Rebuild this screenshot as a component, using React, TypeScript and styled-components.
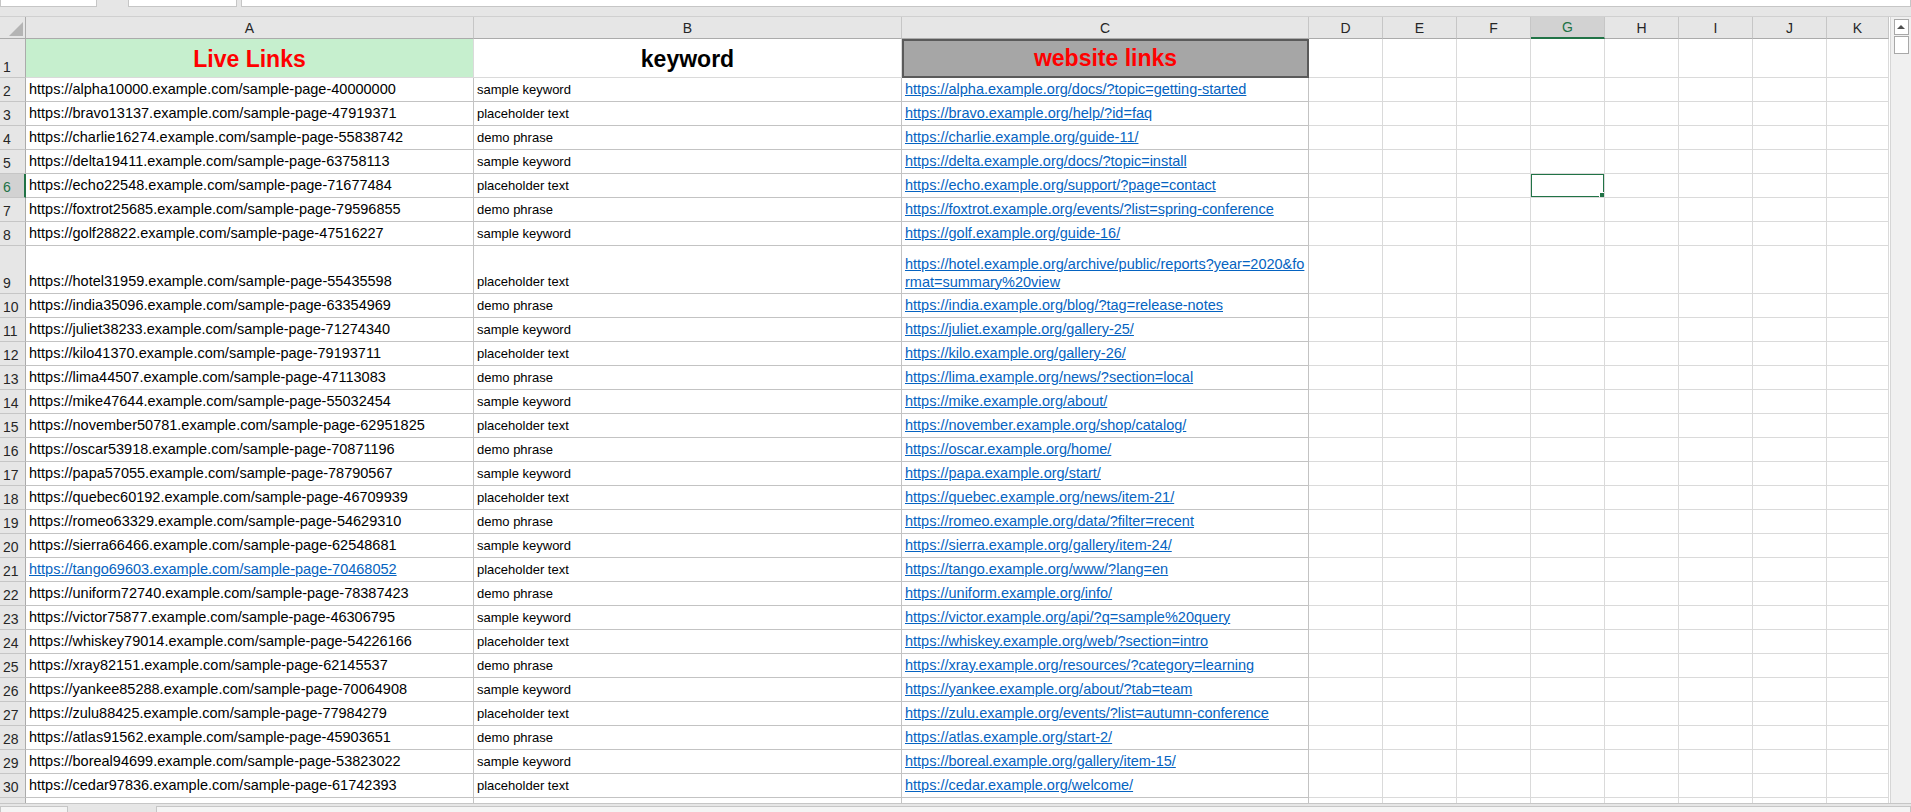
import React from 'react';
import styled, { createGlobalStyle } from 'styled-components';

const GlobalStyle = createGlobalStyle`
  html, body {
    margin: 0;
    padding: 0;
    background: #ffffff;
    overflow: hidden;
  }
  body {
    font-family: "Liberation Sans", Arial, sans-serif;
  }
`;

const Page = styled.div`
  width: 1911px;
  height: 812px;
  display: flex;
  flex-direction: column;
  background: #e6e6e6;
`;

const TopStrip = styled.div`
  height: 17px;
  display: flex;
  align-items: flex-start;
  background: #e6e6e6;
  border-bottom: 1px solid #d0d0d0;
  box-sizing: border-box;
`;

const StripBox = styled.div<{ $w?: number; $ml?: number; $grow?: boolean }>`
  height: 7px;
  background: #ffffff;
  border: 1px solid #c6c6c6;
  border-top: none;
  box-sizing: border-box;
  width: ${(p) => (p.$w ? `${p.$w}px` : 'auto')};
  margin-left: ${(p) => p.$ml ?? 0}px;
  flex: ${(p) => (p.$grow ? 1 : 'none')};
`;

const Main = styled.div`
  flex: 1;
  display: flex;
  min-height: 0;
  overflow: hidden;
`;

const Sheet = styled.div`
  flex: 1;
  display: grid;
  grid-template-columns: 26px 448px 428px 407px repeat(7, 74px) 62px;
  grid-auto-rows: 24px;
  grid-template-rows: 22px 39px;
  background: #ffffff;
  align-content: start;
  overflow: hidden;
`;

const Corner = styled.div`
  background: #e6e6e6;
  border-right: 1px solid #ababab;
  border-bottom: 1px solid #ababab;
  position: relative;
  &::after {
    content: '';
    position: absolute;
    right: 2px;
    bottom: 2px;
    border-left: 14px solid transparent;
    border-bottom: 14px solid #b4b4b4;
  }
`;

const ColHead = styled.div<{ $active?: boolean }>`
  background: ${(p) => (p.$active ? '#d2d2d2' : '#e6e6e6')};
  color: ${(p) => (p.$active ? '#217346' : '#262626')};
  border-right: 1px solid #c6c6c6;
  border-bottom: ${(p) => (p.$active ? '2px solid #217346' : '1px solid #ababab')};
  box-sizing: border-box;
  display: flex;
  align-items: center;
  justify-content: center;
  font-size: 14px;
`;

const RowHead = styled.div<{ $active?: boolean }>`
  background: ${(p) => (p.$active ? '#d2d2d2' : '#e6e6e6')};
  color: ${(p) => (p.$active ? '#217346' : '#262626')};
  border-right: ${(p) => (p.$active ? '2px solid #217346' : '1px solid #ababab')};
  border-bottom: 1px solid #c6c6c6;
  box-sizing: border-box;
  display: flex;
  align-items: flex-end;
  padding: 0 0 2px 3px;
  font-size: 14px;
  overflow: hidden;
`;

const Cell = styled.div<{ $boxed?: boolean; $small?: boolean }>`
  position: relative;
  border-right: 1px solid ${(p) => (p.$boxed ? '#c3c3c3' : '#dadada')};
  border-bottom: 1px solid ${(p) => (p.$boxed ? '#c3c3c3' : '#dadada')};
  box-sizing: border-box;
  display: flex;
  align-items: flex-end;
  padding: 0 2px 3px 3px;
  font-size: ${(p) => (p.$small ? '13px' : '14.5px')};
  color: #000000;
  white-space: nowrap;
  overflow: hidden;
  line-height: 1.2;
`;

const WrapCell = styled(Cell)`
  white-space: normal;
  word-break: break-all;
  padding-bottom: 2px;
`;

const TitleCell = styled.div<{ $bg: string; $color: string; $frame?: boolean }>`
  background: ${(p) => p.$bg};
  color: ${(p) => p.$color};
  border: ${(p) => (p.$frame ? '2px solid #5a5a5a' : 'none')};
  border-right: ${(p) => (p.$frame ? '2px solid #5a5a5a' : '1px solid #dadada')};
  border-bottom: ${(p) => (p.$frame ? '2px solid #5a5a5a' : '1px solid #dadada')};
  box-sizing: border-box;
  display: flex;
  align-items: flex-end;
  justify-content: center;
  padding-bottom: 4px;
  font-size: 23px;
  font-weight: 700;
`;

const Link = styled.span`
  color: #0563c1;
  text-decoration: underline;
`;

const Selection = styled.div`
  position: absolute;
  inset: -1px;
  border: 2px solid #217346;
  pointer-events: none;
  &::after {
    content: '';
    position: absolute;
    right: -4px;
    bottom: -4px;
    width: 6px;
    height: 6px;
    background: #217346;
    border: 1px solid #ffffff;
  }
`;

const VScroll = styled.div`
  width: 21px;
  background: #f0f0f0;
  border-left: 1px solid #d6d6d6;
  display: flex;
  flex-direction: column;
  align-items: center;
  padding-top: 2px;
  gap: 1px;
  box-sizing: border-box;
`;

const ScrollBtn = styled.div`
  width: 13px;
  height: 14px;
  background: #ffffff;
  border: 1px solid #a8a8a8;
  display: flex;
  align-items: center;
  justify-content: center;
  &::before {
    content: '';
    border-left: 4px solid transparent;
    border-right: 4px solid transparent;
    border-bottom: 4px solid #505050;
  }
`;

const ScrollThumb = styled.div`
  width: 13px;
  height: 16px;
  background: #ffffff;
  border: 1px solid #a8a8a8;
`;

const BottomBar = styled.div`
  height: 9px;
  display: flex;
  align-items: flex-end;
  background: #e6e6e6;
  border-top: 1px solid #c6c6c6;
  box-sizing: border-box;
`;

const BottomBox = styled.div<{ $w?: number; $ml?: number; $grow?: boolean }>`
  height: 6px;
  background: #f4f4f4;
  border: 1px solid #c6c6c6;
  border-bottom: none;
  box-sizing: border-box;
  width: ${(p) => (p.$w ? `${p.$w}px` : 'auto')};
  margin-left: ${(p) => p.$ml ?? 0}px;
  flex: ${(p) => (p.$grow ? 1 : 'none')};
`;

const COLS = ['A', 'B', 'C', 'D', 'E', 'F', 'G', 'H', 'I', 'J', 'K'];
const ACTIVE_COL = 'G';
const ACTIVE_ROW = 6;

const keywords = ['sample keyword', 'placeholder text', 'demo phrase'];
const hosts = [
  'alpha', 'bravo', 'charlie', 'delta', 'echo', 'foxtrot', 'golf', 'hotel',
  'india', 'juliet', 'kilo', 'lima', 'mike', 'november', 'oscar', 'papa',
  'quebec', 'romeo', 'sierra', 'tango', 'uniform', 'victor', 'whiskey',
  'xray', 'yankee', 'zulu', 'atlas', 'boreal', 'cedar',
];
const paths = [
  'docs/?topic=getting-started', 'help/?id=faq', 'guide-11/', 'docs/?topic=install',
  'support/?page=contact', 'events/?list=spring-conference', 'guide-16/',
  'archive/public/reports?year=2020&format=summary%20view', 'blog/?tag=release-notes',
  'gallery-25/', 'gallery-26/', 'news/?section=local', 'about/', 'shop/catalog/',
  'home/', 'start/', 'news/item-21/', 'data/?filter=recent', 'gallery/item-24/',
  'www/?lang=en', 'info/', 'api/?q=sample%20query', 'web/?section=intro',
  'resources/?category=learning', 'about/?tab=team', 'events/?list=autumn-conference',
  'start-2/', 'gallery/item-15/', 'welcome/',
];

type Row = { n: number; a: string; b: string; c: string; tall?: boolean; aLink?: boolean };

const rows: Row[] = hosts.map((h, i) => {
  const n = i + 2;
  const id = 40000000 + ((i * 7919371) % 39999999);
  return {
    n,
    a: `https://${h}${10000 + i * 3137}.example.com/sample-page-${id}`,
    b: keywords[i % 3],
    c: `https://${h}.example.org/${paths[i]}`,
    tall: n === 9,
    aLink: n === 21,
  };
});

const App: React.FC = () => {
  const renderEmpty = (rowNum: number, col: string) => (
    <Cell key={col}>
      {rowNum === ACTIVE_ROW && col === ACTIVE_COL && <Selection />}
    </Cell>
  );

  return (
    <>
      <GlobalStyle />
      <Page>
        <TopStrip>
          <StripBox $w={97} />
          <StripBox $w={109} $ml={31} />
          <StripBox $grow $ml={4} />
        </TopStrip>
        <Main>
          <Sheet>
            <Corner />
            {COLS.map((c) => (
              <ColHead key={c} $active={c === ACTIVE_COL}>
                {c}
              </ColHead>
            ))}

            <RowHead>1</RowHead>
            <TitleCell $bg="#c6efce" $color="#ff0000">Live Links</TitleCell>
            <TitleCell $bg="#ffffff" $color="#000000">keyword</TitleCell>
            <TitleCell $bg="#a6a6a6" $color="#ff0000" $frame>website links</TitleCell>
            {COLS.slice(3).map((c) => renderEmpty(1, c))}

            {rows.map((r) => {
              const span = r.tall ? { gridRowEnd: 'span 2' } : undefined;
              return (
                <React.Fragment key={r.n}>
                  <RowHead $active={r.n === ACTIVE_ROW} style={span}>
                    {r.n}
                  </RowHead>
                  <Cell $boxed style={span}>
                    {r.aLink ? <Link>{r.a}</Link> : r.a}
                  </Cell>
                  <Cell $boxed $small style={span}>
                    {r.b}
                  </Cell>
                  {r.tall ? (
                    <WrapCell $boxed style={span}>
                      <Link>{r.c}</Link>
                    </WrapCell>
                  ) : (
                    <Cell $boxed>
                      <Link>{r.c}</Link>
                    </Cell>
                  )}
                  {COLS.slice(3).map((c) =>
                    r.tall ? <Cell key={c} style={span} /> : renderEmpty(r.n, c)
                  )}
                </React.Fragment>
              );
            })}

            <RowHead />
            {COLS.map((c) => (
              <Cell key={c} $boxed={c === 'A' || c === 'B' || c === 'C'} />
            ))}
          </Sheet>
          <VScroll>
            <ScrollBtn />
            <ScrollThumb />
          </VScroll>
        </Main>
        <BottomBar>
          <BottomBox $w={68} />
          <BottomBox $grow $ml={88} />
        </BottomBar>
      </Page>
    </>
  );
};

export default App;
